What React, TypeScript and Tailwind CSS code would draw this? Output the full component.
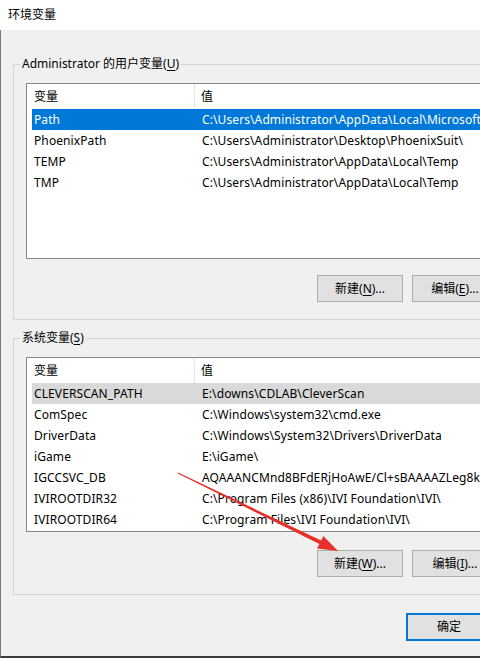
import React from "react";

type Row = { name: string; value: string };

const userVars: Row[] = [
  { name: "Path", value: "C:\\Users\\Administrator\\AppData\\Local\\Microsoft\\WindowsApps;" },
  { name: "PhoenixPath", value: "C:\\Users\\Administrator\\Desktop\\PhoenixSuit\\" },
  { name: "TEMP", value: "C:\\Users\\Administrator\\AppData\\Local\\Temp" },
  { name: "TMP", value: "C:\\Users\\Administrator\\AppData\\Local\\Temp" },
];

const systemVars: Row[] = [
  { name: "CLEVERSCAN_PATH", value: "E:\\downs\\CDLAB\\CleverScan" },
  { name: "ComSpec", value: "C:\\Windows\\system32\\cmd.exe" },
  { name: "DriverData", value: "C:\\Windows\\System32\\Drivers\\DriverData" },
  { name: "iGame", value: "E:\\iGame\\" },
  { name: "IGCCSVC_DB", value: "AQAAANCMnd8BFdERjHoAwE/Cl+sBAAAAZLeg8kQ1GUKa" },
  { name: "IVIROOTDIR32", value: "C:\\Program Files (x86)\\IVI Foundation\\IVI\\" },
  { name: "IVIROOTDIR64", value: "C:\\Program Files\\IVI Foundation\\IVI\\" },
];

function ListView({
  rows,
  selectedClass,
  heightClass,
}: {
  rows: Row[];
  selectedClass: string;
  heightClass: string;
}) {
  return (
    <div className={`ml-[12px] ${heightClass} border border-[#828790] bg-white overflow-hidden`}>
      <div className="flex h-[25px]">
        <div className="w-[168px] pl-[7px] border-r border-[#e5e5e5] flex items-center">变量</div>
        <div className="pl-[6px] flex items-center">值</div>
      </div>
      {rows.map((r, i) => (
        <div
          key={r.name}
          className={`ml-[5px] flex h-[21px] items-center whitespace-nowrap tracking-[0.1px] ${
            i === 0 ? selectedClass : ""
          }`}
        >
          <div className="w-[170px] shrink-0 pl-[2px]">{r.name}</div>
          <div>{r.value}</div>
        </div>
      ))}
    </div>
  );
}

function Button({ label, mnemonic }: { label: string; mnemonic: string }) {
  return (
    <div className="w-[86px] h-[27px] shrink-0 border border-[#adadad] bg-[#e1e1e1] flex items-center justify-center">
      <span>
        {label}(<span className="underline underline-offset-2">{mnemonic}</span>)...
      </span>
    </div>
  );
}

export default function App() {
  return (
    <div className="relative w-[480px] h-[658px] overflow-hidden bg-[#f0f0f0] text-[12px] leading-[16px] text-black font-['Noto_Sans','Noto_Sans_CJK_SC',sans-serif]">
      <div className="w-[620px] h-full flex flex-col">
        {/* title bar */}
        <div className="h-[30px] shrink-0 bg-white flex items-center pl-[8px] text-[12px]">环境变量</div>

        {/* dialog body */}
        <div className="flex-1 border-l border-[#7a7a7a] border-b-2 border-b-[#3c3c3c] pl-[12px]">
          <fieldset className="mt-[26px] border border-[#d5d5d5] pb-[17px]">
            <legend className="ml-[6px] px-[2px]">
              Administrator 的用户变量(<span className="underline underline-offset-2">U</span>)
            </legend>
            <div className="mt-[11px]">
              <ListView rows={userVars} selectedClass="bg-[#0078d7] text-white" heightClass="h-[176px]" />
            </div>
            <div className="mt-[16px] ml-[303px] flex gap-[9px]">
              <Button label="新建" mnemonic="N" />
              <Button label="编辑" mnemonic="E" />
            </div>
          </fieldset>

          <fieldset className="mt-[10px] border border-[#d5d5d5] pb-[17px]">
            <legend className="ml-[6px] px-[2px]">
              系统变量(<span className="underline underline-offset-2">S</span>)
            </legend>
            <div className="mt-[11px]">
              <ListView rows={systemVars} selectedClass="bg-[#d9d9d9] text-black" heightClass="h-[175px]" />
            </div>
            <div className="mt-[18px] ml-[303px] flex gap-[9px]">
              <Button label="新建" mnemonic="W" />
              <Button label="编辑" mnemonic="I" />
            </div>
          </fieldset>

          <div className="mt-[18px] ml-[393px] flex">
            <div className="w-[86px] h-[28px] border-2 border-[#0078d7] bg-[#e1e1e1] flex items-center justify-center">
              确定
            </div>
          </div>
        </div>
      </div>

      {/* red annotation arrow */}
      <svg className="absolute left-0 top-0 pointer-events-none" width="480" height="658" viewBox="0 0 480 658">
        <polygon
          points="178,473.3 178.2,472.6 321.2,540.6 323.3,535.9 338,551 316.9,548.5 319.4,544 177.8,473.5"
          fill="#e8302a"
        />
      </svg>
    </div>
  );
}
